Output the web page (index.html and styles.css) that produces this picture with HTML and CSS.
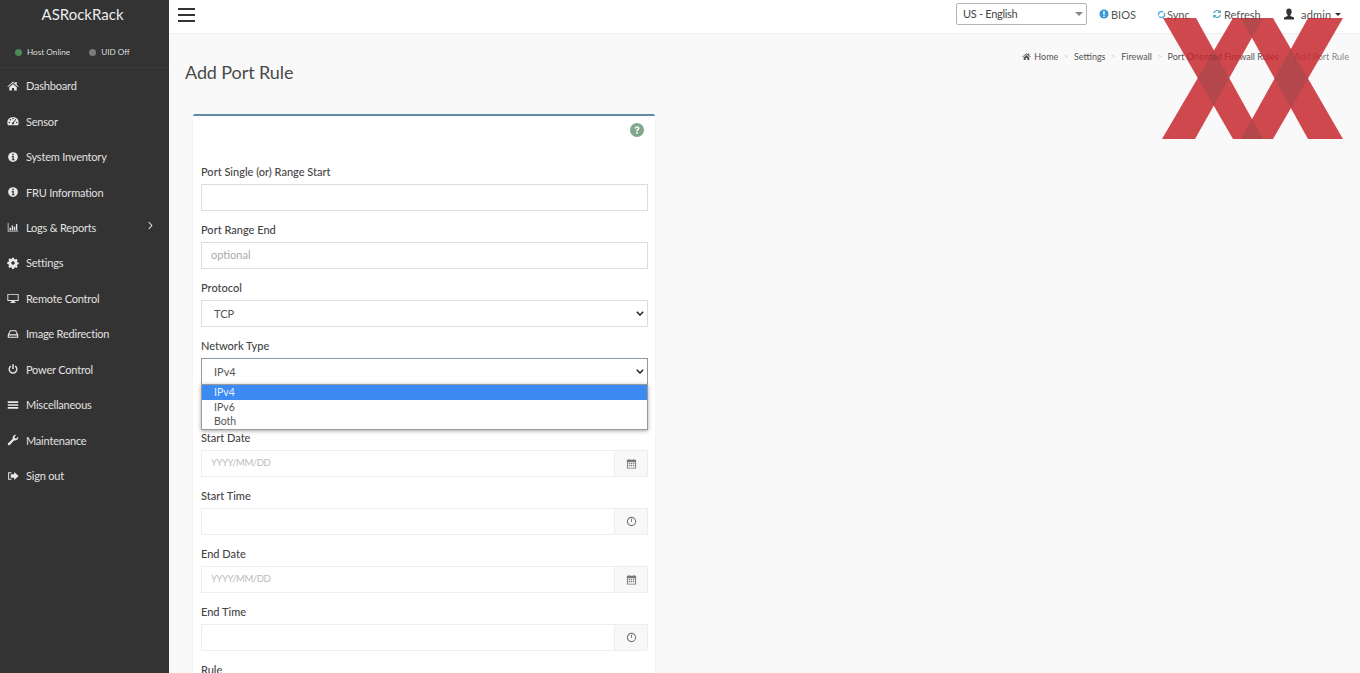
FILE: index.html
```html
<!DOCTYPE html>
<html lang="en">
<head>
<meta charset="utf-8">
<title>Add Port Rule</title>
<link rel="stylesheet" href="styles.css">
</head>
<body>
<div class="app">
  <aside class="sidebar">
    <div class="logo">ASRockRack</div>
    <div class="status">
      <span class="stat"><i class="dot on"></i>Host Online</span>
      <span class="stat"><i class="dot off"></i>UID Off</span>
    </div>
    <nav class="menu">
      <a class="item"><svg class="ico" viewBox="0 0 16 16"><path d="M8 2 0.5 8.500l.8.9L8 3.800l6.700 5.600.8-.9L13 6.300V2.500h-2v2.100zM3 9.600V14h3.600v-3.200h2.800V14H13V9.600L8 5.400z"/></svg>Dashboard</a>
      <a class="item"><svg class="ico" viewBox="0 0 16 16"><path fill-rule="evenodd" d="M8 2.500a7.600 7.600 0 0 0-7.600 7.600c0 1.300.3 2.400.9 3.400h13.400c.6-1 .9-2.100.9-3.400A7.600 7.600 0 0 0 8 2.500zM4.600 5.300a1 1 0 1 1 0 2 1 1 0 0 1 0-2zM8 3.800a1 1 0 1 1 0 2 1 1 0 0 1 0-2zM3 9a1 1 0 1 1 0 2 1 1 0 0 1 0-2zm10 0a1 1 0 1 1 0 2 1 1 0 0 1 0-2zm-1.700-3.600.9.6-3 4.300a1.400 1.400 0 1 1-1-.6z"/></svg>Sensor</a>
      <a class="item"><svg class="ico" viewBox="0 0 16 16"><path fill-rule="evenodd" d="M8 1.500a6.500 6.500 0 1 0 0 13 6.500 6.500 0 0 0 0-13zM7 3.600h2v2H7zM6.400 6.800H9v4.100h1v1.400H6.400v-1.400h1V8.200h-1z"/></svg>System Inventory</a>
      <a class="item"><svg class="ico" viewBox="0 0 16 16"><path fill-rule="evenodd" d="M8 1.500a6.500 6.500 0 1 0 0 13 6.500 6.500 0 0 0 0-13zM7 3.600h2v2H7zM6.400 6.800H9v4.100h1v1.400H6.400v-1.400h1V8.200h-1z"/></svg>FRU Information</a>
      <a class="item"><svg class="ico" viewBox="0 0 16 16"><path d="M1 2.500h1V13h13v1H1zM3.500 9h1.800v3.200H3.500zM6.300 6h1.800v6.200H6.300zM9.100 7.500h1.800v4.700H9.100zM11.900 4h1.800v8.200h-1.800z"/></svg>Logs &amp; Reports<svg class="chev" viewBox="0 0 8 10"><path d="M2 1l3.500 4L2 9" fill="none" stroke="currentColor" stroke-width="1.300"/></svg></a>
      <a class="item"><svg class="ico" viewBox="0 0 16 16"><path fill-rule="evenodd" d="M6.800 1.500h2.400l.4 1.800 1.300.6 1.600-1 1.700 1.700-1 1.600.6 1.300 1.800.4v2.400l-1.800.4-.6 1.300 1 1.600-1.700 1.700-1.600-1-1.300.6-.4 1.800H6.800l-.4-1.800-1.300-.6-1.600 1-1.700-1.700 1-1.600-.6-1.300L.4 9.800V7.400l1.800-.4.6-1.300-1-1.600 1.700-1.700 1.600 1 1.300-.6zM8 6.200a2.400 2.400 0 1 0 0 4.800 2.400 2.400 0 0 0 0-4.800z" transform="translate(0 -.6)"/></svg>Settings</a>
      <a class="item"><svg class="ico" viewBox="0 0 16 16"><path fill-rule="evenodd" d="M.5 2.500h15v9.500h-5.700l.4 1.500h1.300v1H4.500v-1h1.300l.4-1.500H.5zM1.700 3.700v6.800h12.600V3.700z"/></svg>Remote Control</a>
      <a class="item"><svg class="ico" viewBox="0 0 16 16"><path fill-rule="evenodd" d="M4 3h8l3 6v4H1V9zM4.800 4.200 3 8.200h10l-1.800-4zM2.500 10v1.800h11V10z"/></svg>Image Redirection</a>
      <a class="item"><svg class="ico" viewBox="0 0 16 16"><path d="M7 1.500h2v6.500H7z"/><path d="M4.600 3.400a6 6 0 1 0 6.800 0l-1 1.500a4.200 4.200 0 1 1-4.800 0z"/></svg>Power Control</a>
      <a class="item"><svg class="ico" viewBox="0 0 16 16"><path d="M1 3h14v2.200H1zM1 6.900h14v2.200H1zM1 10.800h14V13H1z"/></svg>Miscellaneous</a>
      <a class="item"><svg class="ico" viewBox="0 0 16 16"><path d="M15 4.500a4 4 0 0 1-5.300 3.800L3.800 14.500a1.500 1.500 0 0 1-2.300-2.200l6.200-6A4 4 0 0 1 12.500 1.100L10 3.600l.4 2 2 .4 2.400-2.400z"/></svg>Maintenance</a>
      <a class="item"><svg class="ico" viewBox="0 0 16 16"><path d="M6 3H1.500v10H6v-1.300H2.800V4.300H6z"/><path d="M9.500 2.800 15.500 8l-6 5.200V10.200H5V5.800h4.500z"/></svg>Sign out</a>
    </nav>
  </aside>
  <div class="main">
    <header class="topbar">
      <div class="burger"><span></span><span></span><span></span></div>
      <div class="tools">
        <div class="lang">US - English<i class="lang-caret"></i></div>
        <span class="tool tool-bios"><svg class="tool-ico" viewBox="0 0 12 12"><circle cx="6" cy="6" r="5.500" fill="#3c9ad6"/><rect x="5.200" y="2.300" width="1.600" height="4.800" fill="#fff"/><rect x="5.200" y="8" width="1.600" height="1.600" fill="#fff"/></svg>BIOS</span>
        <span class="tool tool-sync"><svg class="tool-ico small" viewBox="0 0 10 10"><circle cx="5" cy="5" r="3.400" fill="none" stroke="#5da9d6" stroke-width="1.600" stroke-dasharray="8 1.500"/></svg>Sync</span>
        <span class="tool tool-refresh"><svg class="tool-ico" viewBox="0 0 12 12"><path d="M10.500 1v3.700H6.800l1.300-1.300A3.300 3.300 0 0 0 2.700 5H1.300a4.700 4.700 0 0 1 7.800-2.600zM1.500 11V7.300h3.700L3.900 8.600A3.300 3.300 0 0 0 9.300 7h1.400a4.700 4.700 0 0 1-7.800 2.600z" fill="#44a3bd"/></svg>Refresh</span>
        <span class="tool tool-user"><svg class="user-ico" viewBox="0 0 12 12"><path d="M6 .5c1.700 0 2.700 1.200 2.700 3S7.800 6.500 7.400 7v1l3.600 1.500V11.500H1V9.500L4.600 8V7C4.200 6.500 3.300 5.300 3.300 3.500S4.300.5 6 .5z" fill="#333"/></svg>admin<i class="user-caret"></i></span>
      </div>
    </header>
    <div class="content">
      <div class="head">
        <h1 class="title">Add Port Rule</h1>
        <ol class="crumbs">
          <li><svg class="crumb-ico" viewBox="0 0 16 16"><path d="M8 2 .5 8.500l.8.900L8 3.800l6.700 5.600.8-.9L13 6.300V2.500h-2v2.100zM3 9.600V14h3.600v-3.200h2.800V14H13V9.600L8 5.400z"/></svg>Home</li>
          <li class="sep">&gt;</li><li>Settings</li>
          <li class="sep">&gt;</li><li>Firewall</li>
          <li class="sep">&gt;</li><li>Port Oriented Firewall Rules</li>
          <li class="sep">&gt;</li><li class="last">Add Port Rule</li>
        </ol>
      </div>
      <section class="card">
        <div class="help-row"><svg class="help" viewBox="0 0 14 14"><circle cx="7" cy="7" r="7" fill="#7fa98a"/><path d="M4.700 5.400C4.800 4 5.800 3.200 7.100 3.200c1.400 0 2.400.8 2.400 2 0 1.700-1.800 1.700-1.800 3H6.200c0-2 1.800-2.100 1.800-3 0-.4-.4-.7-.9-.7s-.9.300-1 .9z" fill="#fff"/><rect x="6.200" y="9" width="1.600" height="1.700" fill="#fff"/></svg></div>
        <div class="field"><label class="lbl">Port Single (or) Range Start</label><input class="ctl" type="text"></div>
        <div class="field"><label class="lbl">Port Range End</label><input class="ctl" type="text" placeholder="optional"></div>
        <div class="field"><label class="lbl">Protocol</label><select class="ctl sel"><option>TCP</option></select></div>
        <div class="field field-net">
          <label class="lbl">Network Type</label>
          <select class="ctl sel open"><option>IPv4</option></select>
          <ul class="drop">
            <li class="opt sel-opt">IPv4</li>
            <li class="opt">IPv6</li>
            <li class="opt">Both</li>
          </ul>
        </div>
        <div class="field"><label class="lbl">Start Date</label><div class="group"><input class="ctl soft date" type="text" placeholder="YYYY/MM/DD"><span class="addon"><svg class="addon-ico" viewBox="0 0 12 12"><path d="M1 2h2V1h1v1h4V1h1v1h2v9.500H1zM2 4.500v6h8v-6zM3 5.500h1.400v1.200H3zm2.300 0h1.400v1.200H5.300zm2.300 0H9v1.200H7.600zM3 7.700h1.400v1.200H3zm2.300 0h1.400v1.200H5.300zm2.300 0H9v1.200H7.600z"/></svg></span></div></div>
        <div class="field"><label class="lbl">Start Time</label><div class="group"><input class="ctl soft" type="text"><span class="addon"><svg class="addon-ico" viewBox="0 0 12 12"><circle cx="6" cy="6" r="4.500" fill="none" stroke="#777" stroke-width="1.200"/><path d="M5.500 3h1v3.500h-1z"/></svg></span></div></div>
        <div class="field"><label class="lbl">End Date</label><div class="group"><input class="ctl soft date" type="text" placeholder="YYYY/MM/DD"><span class="addon"><svg class="addon-ico" viewBox="0 0 12 12"><path d="M1 2h2V1h1v1h4V1h1v1h2v9.500H1zM2 4.500v6h8v-6zM3 5.500h1.400v1.200H3zm2.300 0h1.400v1.200H5.300zm2.300 0H9v1.200H7.600zM3 7.700h1.400v1.200H3zm2.300 0h1.400v1.200H5.300zm2.300 0H9v1.200H7.600z"/></svg></span></div></div>
        <div class="field"><label class="lbl">End Time</label><div class="group"><input class="ctl soft" type="text"><span class="addon"><svg class="addon-ico" viewBox="0 0 12 12"><circle cx="6" cy="6" r="4.500" fill="none" stroke="#777" stroke-width="1.200"/><path d="M5.500 3h1v3.500h-1z"/></svg></span></div></div>
        <div class="field"><label class="lbl">Rule</label></div>
      </section>
    </div>
  </div>
  <svg class="marks" viewBox="0 0 181 121">
    <g class="bars">
      <path d="M1 0h33l67 121H71z"/>
      <path d="M0 121 71 0h30L33 121z"/>
      <path d="M79 0h32l70 121h-35z"/>
      <path d="M79 121 146 0h35l-70 121z"/>
    </g>
    <path class="lap" d="M52 32.400 67.200 60 51.700 87.700 35.700 60z"/>
    <path class="lap" d="M128.900 30.900 146 60.500 128.900 90.100 112.500 60.500z"/>
    <path class="lap" d="M79 0h22L89.900 19.700z"/>
    <path class="lap" d="M79 121h22L90 101.200z"/>
  </svg>
</div>
</body>
</html>
```
FILE: styles.css
```css
* { box-sizing: border-box; }
html, body { margin: 0; height: 673px; overflow: hidden; }
body { font-family: Lato, "Noto Sans", sans-serif; font-size: 11px; color: #444; background: #f9f9f9; }
.app { position: relative; display: flex; width: 1360px; height: 673px; overflow: hidden; }

.sidebar { flex: 0 0 169px; background: #333; color: #e6e6e6; }
.logo { height: 33px; padding: 4px 4px 0 0; text-align: center; font-size: 15px; line-height: 20px; color: #ececec; }
.status { display: flex; align-items: flex-start; gap: 19px; height: 35px; padding: 13px 0 0 15px; border-bottom: 1px solid #3b3b3b; font-size: 8.200px; line-height: 12px; }
.stat { display: flex; align-items: center; color: #ddd; }
.dot { width: 7px; height: 7px; border-radius: 50%; margin-right: 5px; }
.dot.on { background: #4e8a57; }
.dot.off { background: #7b7b7b; }
.menu { display: flex; flex-direction: column; }
.item { position: relative; display: flex; align-items: center; height: 35.450px; padding-left: 7px; font-size: 11px; letter-spacing: -.2px; color: #e2e2e2; }
.ico { flex: none; width: 12px; height: 12px; margin-right: 7px; fill: #e8e8e8; }
.chev { position: absolute; left: 147px; top: 11px; width: 7px; height: 9px; color: #ddd; }

.main { flex: 1; min-width: 0; display: flex; flex-direction: column; }
.topbar { flex: none; display: flex; align-items: flex-start; justify-content: space-between; height: 34px; background: #fff; border-bottom: 1px solid #eee; }
.burger { display: flex; flex-direction: column; gap: 4px; width: 17px; margin: 8px 0 0 9px; }
.burger span { height: 2px; background: #333; }
.tools { display: flex; align-items: center; height: 28px; font-size: 11px; color: #555; }
.lang { position: relative; width: 131px; height: 22px; margin-right: 12px; padding-left: 6px; border: 1px solid #b5b5b5; border-radius: 2px; font-size: 11px; letter-spacing: -.3px; line-height: 20px; color: #444; }
.lang-caret { position: absolute; right: 3px; top: 8px; border: 4px solid transparent; border-top: 4px solid #888; border-bottom: 0; }
.tool { display: flex; align-items: center; }
.tool-ico { width: 10px; height: 10px; margin-right: 2px; }
.tool-ico.small { width: 9px; height: 9px; margin-right: 1px; }
.tool-bios { width: 58px; }
.tool-sync { width: 55px; }
.tool-refresh { width: 71px; }
.tool-user { width: 77px; letter-spacing: .2px; }
.user-ico { width: 12px; height: 12px; margin-right: 6px; }
.user-caret { margin-left: 4px; border: 3px solid transparent; border-top: 3px solid #333; border-bottom: 0; }

.content { flex: 1; padding: 0 11px 0 16px; }
.head { display: flex; justify-content: space-between; height: 80px; }
.title { margin: 24px 0 0; font-size: 18px; font-weight: 400; line-height: 28px; color: #4a4a4a; letter-spacing: -.1px; }
.crumbs { display: flex; gap: 5.500px; margin: 16px 0 0; padding: 0; list-style: none; font-size: 9px; line-height: 13px; color: #555; }
.crumb-ico { width: 9px; height: 9px; margin-right: 3px; fill: #555; vertical-align: -1px; }
.sep { color: #ccc; font-size: 8px; }
.last { color: #888; }

.card { width: 462px; margin-left: 8px; padding: 0 7px 0 8px; background: #fff; border-top: 2px solid #5f8ca6; border-radius: 2px 2px 0 0; box-shadow: 0 0 3px rgba(0,0,0,.05); }
.help-row { display: flex; justify-content: flex-end; height: 47px; padding: 7px 4px 0 0; }
.help { width: 14px; height: 14px; }
.field { position: relative; height: 58px; }
.lbl { display: block; height: 21px; font-size: 11px; font-weight: 500; line-height: 17.500px; color: #444; }
.ctl { display: block; width: 100%; height: 27px; padding: 0 9px 2px; background: #fff; border: 1px solid #ddd; border-radius: 0; font: inherit; font-size: 11px; color: #555; outline: 0; }
.ctl::placeholder { color: #aaa; }
.sel { padding: 0 0 0 12px; appearance: none; background: #fff url("data:image/svg+xml,%3Csvg xmlns='http://www.w3.org/2000/svg' viewBox='0 0 8 5'%3E%3Cpath d='M.8.800 4 4l3.200-3.200' fill='none' stroke='%23222' stroke-width='1.500'/%3E%3C/svg%3E") no-repeat right 3px center / 8px 5px; }
.sel.open { border-color: #8d9aa5; }
.field-net { height: 92px; }
.drop { position: absolute; left: 0; top: 47px; width: 100%; height: 46px; margin: 0; padding: 0; list-style: none; background: #fff; border: 1px solid #999; box-shadow: 0 1px 4px rgba(0,0,0,.35); z-index: 2; }
.opt { height: 14.300px; padding-left: 12px; font-size: 10.500px; line-height: 14.300px; color: #555; }
.sel-opt { height: 15px; background: #3d8bf2; color: #e8f2ff; }
.group { display: flex; height: 27px; }
.soft { flex: 1; min-width: 0; border-color: #eee; }
.soft::placeholder { color: #bbb; }
.date { font-size: 9.500px; letter-spacing: -.45px; }
.addon { flex: 0 0 33px; display: flex; align-items: center; justify-content: center; background: #f8f8f8; border: 1px solid #eee; border-left: 0; }
.addon-ico { width: 11px; height: 11px; fill: #777; }

.marks { position: absolute; left: 1162px; top: 18px; width: 181px; height: 121px; pointer-events: none; }
.bars { fill: #c62229; opacity: .82; }
.lap { fill: rgba(70,70,70,.2); }
```
